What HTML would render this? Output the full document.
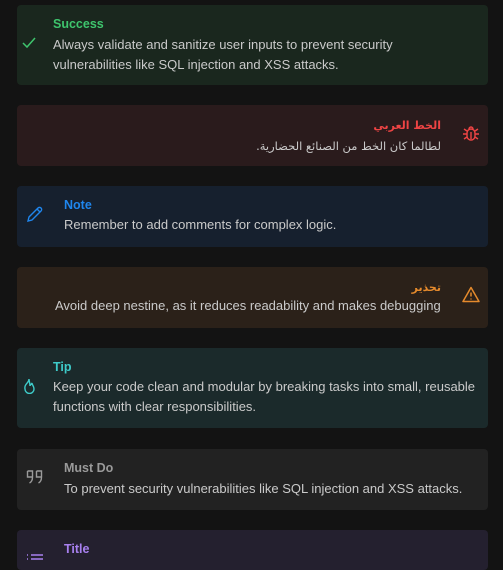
<!DOCTYPE html>
<html><head><meta charset="utf-8"><style>
body{margin:0;width:503px;height:560px;background:#131313;overflow:hidden;font-family:"Liberation Sans","Noto Sans CJK SC",sans-serif;position:relative}
.b{position:absolute;left:17px;width:471px;border-radius:4px}
.t{position:absolute;font-weight:bold;font-size:12.5px}
.p{position:absolute;font-size:13px;color:#cacaca;line-height:20px;white-space:nowrap}
svg{position:absolute}
.ar{font-family:"DejaVu Sans",sans-serif;direction:rtl;text-align:right}
</style></head><body>
<div class="b" style="top:5px;height:80px;background:#1a271e"></div>
<div class="t" style="left:53px;top:17px;color:#3ec46d">Success</div>
<div class="p" style="left:53px;top:35px">Always validate and sanitize user inputs to prevent security<br>vulnerabilities like SQL injection and XSS attacks.</div>
<svg style="left:22px;top:37px" width="14" height="12" viewBox="0 0 14 12"><path d="M1 6l4 4 8-9" fill="none" stroke="#3ec46d" stroke-width="1.5"/></svg>

<div class="b" style="top:105px;height:61px;background:#2a1b1c"></div>
<div class="t ar" style="right:62px;top:119px;color:#ef4444;font-size:11px">الخط العربي</div>
<div class="p ar" style="right:62px;top:136px;font-size:11.5px">لطالما كان الخط من الصنائع الحضارية.</div>
<svg style="left:462px;top:124px" width="18" height="18" viewBox="0 0 18 18" fill="none" stroke="#ef4444" stroke-width="1.4"><rect x="5" y="5" width="8" height="11" rx="4"/><path d="M7 5a2 2 0 014 0M9 8v7M1 10h4M13 10h4M2 5l3 2M16 5l-3 2M2 15l3-2M16 15l-3-2"/></svg>

<div class="b" style="top:186px;height:61px;background:#16202e"></div>
<div class="t" style="left:64px;top:198px;color:#1f86ee">Note</div>
<div class="p" style="left:64px;top:215px">Remember to add comments for complex logic.</div>
<svg style="left:26px;top:205px" width="18" height="18" viewBox="0 0 18 18"><path d="M2 16l1-4L12 3a2 2 0 013 3L6 15z M11 4l3 3" fill="none" stroke="#1f86ee" stroke-width="1.4"/></svg>

<div class="b" style="top:267px;height:61px;background:#2b2119"></div>
<div class="t ar" style="right:62px;top:281px;color:#e58a2c;font-size:11px">تحذير</div>
<div class="p" style="left:55px;top:296px">Avoid deep nestine, as it reduces readability and makes debugging</div>
<svg style="left:462px;top:286px" width="18" height="17" viewBox="0 0 18 17"><path d="M9 1.5L1 15.5h16z M9 6.5v4 M9 12.5v1" fill="none" stroke="#e58a2c" stroke-width="1.5" stroke-linejoin="round"/></svg>

<div class="b" style="top:348px;height:80px;background:#1b2a2b"></div>
<div class="t" style="left:53px;top:360px;color:#3ecbc9">Tip</div>
<div class="p" style="left:53px;top:377px">Keep your code clean and modular by breaking tasks into small, reusable<br>functions with clear responsibilities.</div>
<svg style="left:23px;top:378px" width="13" height="16" viewBox="0 0 13 16"><path d="M6 1c0 4-5 5-4 10a4.5 4.5 0 009 0c0-3-2-4-2-6-1 2-2 2-2 3 0-3-1-5-1-7z" fill="none" stroke="#3ecbc9" stroke-width="1.4"/></svg>

<div class="b" style="top:449px;height:61px;background:#222222"></div>
<div class="t" style="left:64px;top:461px;color:#9a9a9a">Must Do</div>
<div class="p" style="left:64px;top:479px">To prevent security vulnerabilities like SQL injection and XSS attacks.</div>
<svg style="left:26px;top:470px" width="18" height="15" viewBox="0 0 18 15" fill="none" stroke="#9a9a9a" stroke-width="1.4"><path d="M1.5 1h5v6c0 3-1 5-3 6M1.5 1v6h5"/><path d="M10.5 1h5v6c0 3-1 5-3 6M10.5 1v6h5"/></svg>

<div class="b" style="top:530px;height:40px;background:#24202f"></div>
<div class="t" style="left:64px;top:542px;color:#a880ef">Title</div>
<svg style="left:26px;top:553px" width="18" height="10" viewBox="0 0 18 10"><path d="M1 2h1M5 2h12M1 6h1M5 6h12" stroke="#a880ef" stroke-width="1.5"/></svg>
</body></html>
